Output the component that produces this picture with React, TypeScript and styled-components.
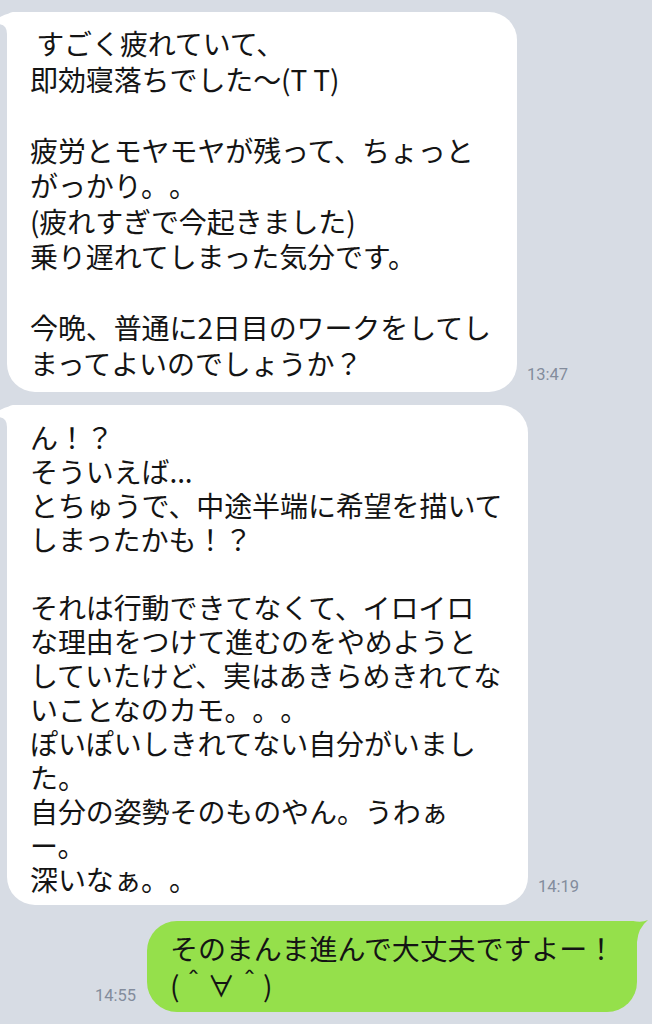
import React from "react";
import styled, { createGlobalStyle } from "styled-components";

const Global = createGlobalStyle`
  html, body {
    margin: 0;
    padding: 0;
    background: #d7dce4;
    min-height: 100%;
  }
  body {
    font-family: "Noto Sans CJK JP", "Noto Sans", sans-serif;
  }
`;

const Page = styled.div`
  display: flex;
  flex-direction: column;
  gap: 13px;
  padding: 12px 15px 0 7px;
  min-height: 1024px;
  box-sizing: border-box;
  overflow: hidden;
`;

const Row = styled.div<{ $mine?: boolean }>`
  display: flex;
  align-items: flex-end;
  justify-content: ${(p) => (p.$mine ? "flex-end" : "flex-start")};
  gap: ${(p) => (p.$mine ? 11 : 10)}px;
  margin-top: ${(p) => (p.$mine ? 3 : 0)}px;
`;

const Bubble = styled.div<{
  $mine?: boolean;
  $width: number;
  $lh: number;
  $pad: string;
}>`
  position: relative;
  box-sizing: border-box;
  width: ${(p) => p.$width}px;
  padding: ${(p) => p.$pad};
  background: ${(p) => (p.$mine ? "#95e04b" : "#ffffff")};
  border-radius: ${(p) => (p.$mine ? "30px 6px 30px 30px" : "6px 28px 28px 28px")};
  font-size: 28px;
  line-height: ${(p) => p.$lh}px;
  color: #141414;
  white-space: pre-wrap;
  letter-spacing: -0.1px;
  text-spacing-trim: space-all;
  font-feature-settings: "palt" 0, "halt" 0, "chws" 0;
`;

const Tail = styled.svg<{ $mine?: boolean }>`
  position: absolute;
  top: 0;
  ${(p) => (p.$mine ? "right: -12px;" : "left: -8px;")}
  width: ${(p) => (p.$mine ? 28 : 24)}px;
  height: 26px;
  overflow: visible;
`;

const Time = styled.div<{ $bottom: number }>`
  font-family: "Roboto", "Liberation Sans", sans-serif;
  font-size: 16.5px;
  line-height: 16px;
  color: #838c9c;
  margin-bottom: ${(p) => p.$bottom}px;
  white-space: nowrap;
`;

const LeftTail = () => (
  <Tail viewBox="0 0 24 26">
    <path d="M24,0 L22,0 Q9,0 -1,6 L-1,12 Q8,12 8,22 L8,26 L24,26 Z" fill="#ffffff" />
  </Tail>
);

const RightTail = () => (
  <Tail $mine viewBox="0 0 28 26">
    <path d="M0,0 L12,0 Q21,2 27,-1 Q17,7 16,21 L16,26 L0,26 Z" fill="#95e04b" />
  </Tail>
);

const msg1 = ` すごく疲れていて、
即効寝落ちでした〜(T T)

疲労とモヤモヤが残って、ちょっと
がっかり。。
(疲れすぎで今起きました)
乗り遅れてしまった気分です。

今晩、普通に2日目のワークをしてし
まってよいのでしょうか？`;

const msg2 = `ん！？
そういえば...
とちゅうで、中途半端に希望を描いて
しまったかも！？

それは行動できてなくて、イロイロ
な理由をつけて進むのをやめようと
していたけど、実はあきらめきれてな
いことなのカモ。。。
ぽいぽいしきれてない自分がいまし
た。
自分の姿勢そのものやん。うわぁ
ー。
深いなぁ。。`;

const msg3 = `そのまんま進んで大丈夫ですよー！
(＾∀＾)`;

export default function App() {
  return (
    <>
      <Global />
      <Page>
        <Row>
          <Bubble $width={510} $lh={35.5} $pad="14px 20px 11px 23px">
            <LeftTail />
            {msg1}
          </Bubble>
          <Time $bottom={9}>13:47</Time>
        </Row>
        <Row>
          <Bubble $width={521} $lh={34} $pad="15px 20px 9px 23px">
            <LeftTail />
            {msg2}
          </Bubble>
          <Time $bottom={10}>14:19</Time>
        </Row>
        <Row $mine>
          <Time $bottom={8}>14:55</Time>
          <Bubble $mine $width={490} $lh={37} $pad="9px 20px 8px 23px">
            <RightTail />
            {msg3}
          </Bubble>
        </Row>
      </Page>
    </>
  );
}
